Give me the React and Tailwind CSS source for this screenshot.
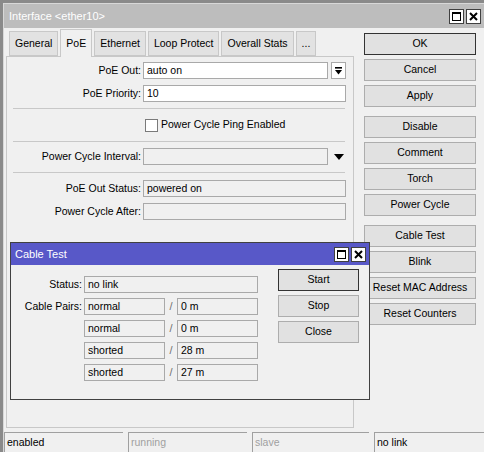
import React from 'react';

const font = { fontFamily: '"Liberation Sans", Arial, sans-serif' };

const Field = ({ value = '', readOnly = false, className = '' }) => (
    <div
        className={`h-[17px] border border-[#a9a9a9] px-[3px] flex items-center text-[10.5px] text-black leading-none ${readOnly ? 'bg-[#f0f0f0]' : 'bg-white'} ${className}`}
    >
        {value}
    </div>
);

const Row = ({ label, children, labelW = 'w-[136px]' }) => (
    <div className="flex items-center">
        <div className={`${labelW} shrink-0 text-right pr-[2px] text-[10.5px] text-black`}>{label}</div>
        {children}
    </div>
);

const Btn = ({ children, primary = false }) => (
    <div
        className={`h-[22px] flex items-center justify-center text-[10.5px] text-black bg-[#e1e1e1] border ${primary ? 'border-[#333333] shadow-[inset_0_0_0_1px_#e1e1e1]' : 'border-[#adadad]'}`}
    >
        {children}
    </div>
);

const Sep = () => <div className="h-px bg-[#c8c8c8] ml-[6px] mr-[8px]" />;

const TitleButtons = () => (
    <div className="flex gap-[2px]">
        <div className="w-[15px] h-[15px] bg-white border border-[#404040] flex items-center justify-center">
            <div className="w-[9px] h-[9px] border border-black border-t-2" />
        </div>
        <div className="w-[15px] h-[15px] bg-white border border-[#404040] flex items-center justify-center">
            <svg width="9" height="9" viewBox="0 0 9 9">
                <path d="M1 1 L8 8 M8 1 L1 8" stroke="black" strokeWidth="2" />
            </svg>
        </div>
    </div>
);

const tabs = ['General', 'PoE', 'Ethernet', 'Loop Protect', 'Overall Stats', '...'];

export default function App() {
    return (
        <div className="w-[484px] h-[452px] bg-[#8a8a8a] relative overflow-hidden" style={font}>
            <div className="absolute left-[3px] top-[3px] right-0 bottom-0 bg-[#f0f0f0] border-l border-t border-[#d8d8d8] flex flex-col">
                {/* title */}
                <div className="h-[24px] bg-[#bdbdbd] flex items-center justify-between pl-[5px] pr-[3px] shrink-0">
                    <span className="text-[11px] text-white">Interface &lt;ether10&gt;</span>
                    <TitleButtons />
                </div>

                <div className="flex flex-1 min-h-0">
                    {/* left */}
                    <div className="w-[348px] ml-[2px] pt-[2px] flex flex-col">
                        <div className="flex items-end h-[26px] pl-[3px] gap-[2px]">
                            {tabs.map((t) =>
                                t === 'PoE' ? (
                                    <div key={t} className="h-[28px] px-[5px] bg-[#f0f0f0] border border-b-0 border-[#c8c8c8] flex items-center text-[10.5px] text-black -mb-px relative z-10">
                                        {t}
                                    </div>
                                ) : (
                                    <div key={t} className="h-[25px] px-[5px] bg-[#e2e2e2] border border-[#c8c8c8] flex items-center text-[10.5px] text-black">
                                        {t}
                                    </div>
                                )
                            )}
                        </div>
                        <div className="h-[372px] border border-[#c8c8c8] bg-[#f0f0f0] pt-[5px] flex flex-col">
                            <Row label="PoE Out:">
                                <Field value="auto on" className="w-[185px]" />
                                <div className="ml-[3px] w-[15px] h-[17px] bg-white border border-[#a9a9a9] flex items-center justify-center">
                                    <svg width="9" height="10" viewBox="0 0 9 10">
                                        <rect x="1" y="1" width="7" height="1.6" fill="black" />
                                        <path d="M1 4 H8 L4.5 8.5 Z" fill="black" />
                                    </svg>
                                </div>
                            </Row>
                            <div className="h-[6px]" />
                            <Row label="PoE Priority:">
                                <Field value="10" className="w-[203px]" />
                            </Row>
                            <div className="h-[6px]" />
                            <Sep />
                            <div className="flex items-center h-[32px] pl-[138px]">
                                <div className="w-[13px] h-[13px] bg-white border border-[#7a7a7a]" />
                                <span className="ml-[3px] text-[10.5px] text-black">Power Cycle Ping Enabled</span>
                            </div>
                            <Sep />
                            <div className="h-[6px]" />
                            <Row label="Power Cycle Interval:">
                                <Field readOnly className="w-[185px]" />
                                <div className="ml-[3px] w-[15px] h-[17px] flex items-center justify-center">
                                    <svg width="10" height="6" viewBox="0 0 10 6">
                                        <path d="M0 0 H10 L5 6 Z" fill="black" />
                                    </svg>
                                </div>
                            </Row>
                            <div className="h-[7px]" />
                            <Sep />
                            <div className="h-[7px]" />
                            <Row label="PoE Out Status:">
                                <Field readOnly value="powered on" className="w-[203px]" />
                            </Row>
                            <div className="h-[6px]" />
                            <Row label="Power Cycle After:">
                                <Field readOnly className="w-[203px]" />
                            </Row>
                        </div>
                    </div>

                    {/* right buttons */}
                    <div className="w-[112px] ml-[10px] pt-[5px] flex flex-col">
                        <Btn primary>OK</Btn>
                        <div className="h-[4px]" />
                        <Btn>Cancel</Btn>
                        <div className="h-[4px]" />
                        <Btn>Apply</Btn>
                        <div className="h-[9px]" />
                        <Btn>Disable</Btn>
                        <div className="h-[4px]" />
                        <Btn>Comment</Btn>
                        <div className="h-[4px]" />
                        <Btn>Torch</Btn>
                        <div className="h-[4px]" />
                        <Btn>Power Cycle</Btn>
                        <div className="h-[9px]" />
                        <Btn>Cable Test</Btn>
                        <div className="h-[4px]" />
                        <Btn>Blink</Btn>
                        <div className="h-[4px]" />
                        <Btn>Reset MAC Address</Btn>
                        <div className="h-[4px]" />
                        <Btn>Reset Counters</Btn>
                    </div>
                </div>

                {/* status bar */}
                <div className="h-[20px] flex gap-[5px] shrink-0 text-[10.5px]">
                    <div className="w-[119px] border-t border-l border-[#a0a0a0] pl-[2px] flex items-center text-black">enabled</div>
                    <div className="w-[119px] border-t border-l border-[#a0a0a0] pl-[2px] flex items-center text-[#a0a0a0]">running</div>
                    <div className="w-[117px] border-t border-l border-[#a0a0a0] pl-[2px] flex items-center text-[#a0a0a0]">slave</div>
                    <div className="flex-1 border-t border-l border-[#a0a0a0] pl-[2px] flex items-center text-black">no link</div>
                </div>
            </div>

            {/* Cable Test dialog */}
            <div className="absolute left-[10px] top-[242px] w-[360px] h-[158px] bg-[#f0f0f0] border border-[#404040] flex flex-col">
                <div className="h-[22px] bg-[#5858c8] flex items-center justify-between pl-[4px] pr-[3px] shrink-0">
                    <span className="text-[11px] text-white">Cable Test</span>
                    <TitleButtons />
                </div>
                <div className="flex">
                    <div className="pt-[11px] flex flex-col gap-[5px]">
                        <Row label="Status:" labelW="w-[73px]">
                            <Field readOnly value="no link" className="w-[174px]" />
                        </Row>
                        {[
                            ['normal', '0 m'],
                            ['normal', '0 m'],
                            ['shorted', '28 m'],
                            ['shorted', '27 m'],
                        ].map(([a, b], i) => (
                            <Row key={i} label={i === 0 ? 'Cable Pairs:' : ''} labelW="w-[73px]">
                                <Field readOnly value={a} className="w-[81px]" />
                                <span className="w-[12px] text-center text-[11px] text-[#707070]">/</span>
                                <Field readOnly value={b} className="w-[81px]" />
                            </Row>
                        ))}
                    </div>
                    <div className="ml-[20px] w-[81px] pt-[4px] flex flex-col gap-[4px]">
                        <Btn primary>Start</Btn>
                        <Btn>Stop</Btn>
                        <Btn>Close</Btn>
                    </div>
                </div>
            </div>
        </div>
    );
}
